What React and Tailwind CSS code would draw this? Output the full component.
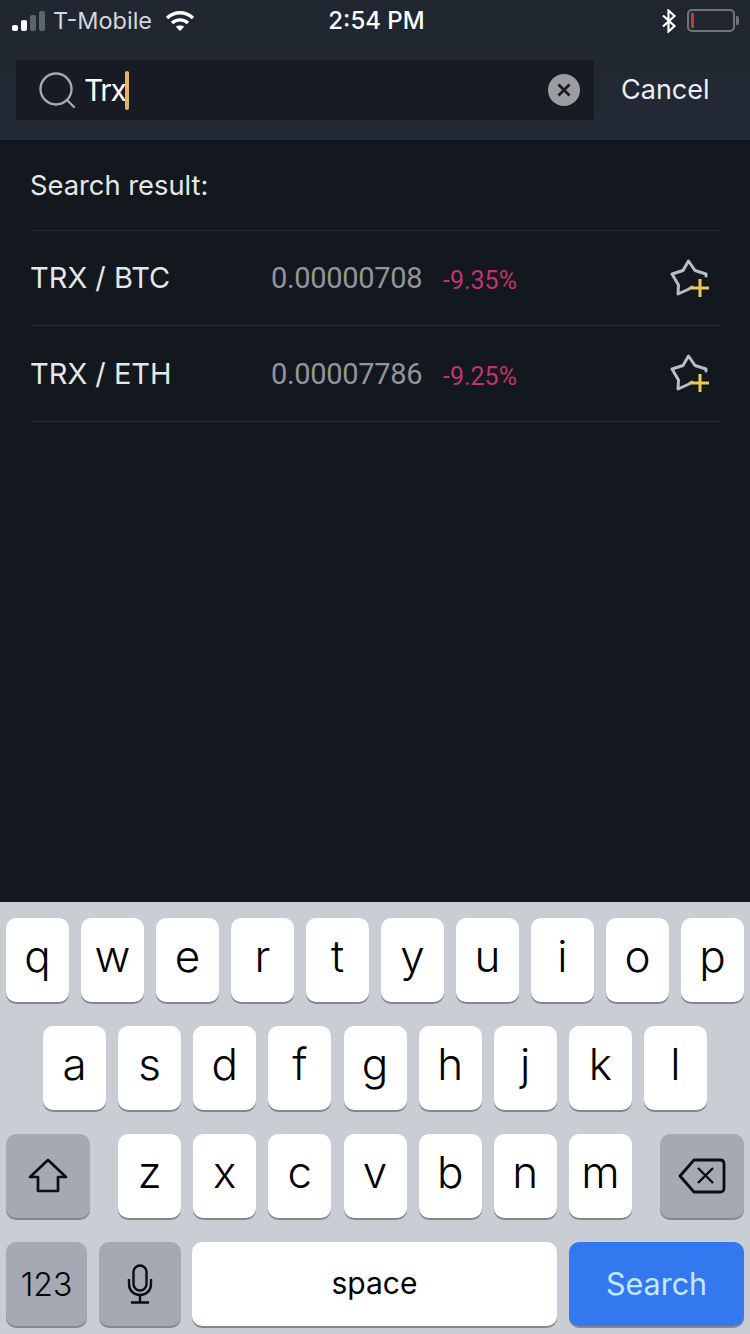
const results = [
  { pair: "TRX / BTC", price: "0.00000708", change: "-9.35%" },
  { pair: "TRX / ETH", price: "0.00007786", change: "-9.25%" },
];

const rowOne = ["q", "w", "e", "r", "t", "y", "u", "i", "o", "p"];
const rowTwo = ["a", "s", "d", "f", "g", "h", "j", "k", "l"];
const rowThree = ["z", "x", "c", "v", "b", "n", "m"];

function SignalBars() {
  return (
    <div className="flex items-end gap-[3px] w-[33px] h-[20px]">
      <div className="w-[6px] h-[6px] rounded-[2px] bg-white" />
      <div className="w-[6px] h-[11px] rounded-[2px] bg-white" />
      <div className="w-[6px] h-[16px] rounded-[2px] bg-[#5e646c]" />
      <div className="w-[6px] h-[20px] rounded-[2px] bg-[#5e646c]" />
    </div>
  );
}

function WifiIcon() {
  return (
    <svg width="30" height="22" viewBox="0 0 30 22" fill="none" stroke="white" strokeWidth="3.4">
      <path d="M2 8 C9.5 1 20.5 1 28 8" />
      <path d="M7 13 C11.5 8.8 18.5 8.8 23 13" />
      <path d="M15 21 L10.8 16.8 C13.2 14.9 16.8 14.9 19.2 16.8 Z" fill="white" stroke="none" />
    </svg>
  );
}

function BluetoothIcon() {
  return (
    <svg width="16" height="24" viewBox="0 0 16 24" fill="none" stroke="white" strokeWidth="2.2">
      <path d="M2 6.5 L13.5 17 L7.5 22.5 L7.5 1.5 L13.5 7 L2 17.5" />
    </svg>
  );
}

function BatteryIcon() {
  return (
    <div className="flex items-center gap-[1px]">
      <div className="w-[48px] h-[23px] rounded-[5px] border-2 border-[#6f747b] p-[2px] flex">
        <div className="w-[3px] h-full bg-[#c9353b]" />
      </div>
      <div className="w-[3px] h-[9px] rounded-r-[2px] bg-[#6f747b]" />
    </div>
  );
}

function StarPlus() {
  return (
    <svg width="40" height="40" viewBox="0 0 40 40" fill="none" strokeLinecap="round" strokeLinejoin="round">
      <path
        d="M36 17 L36 15 L25 11.5 L18.5 2 L13 11.5 L2 15 L8.5 26 L8 35 L18 30.5 L22 28"
        stroke="#bcbdc2"
        strokeWidth="3"
      />
      <path d="M21 29 H39 M30 20 V38" stroke="#f0c850" strokeWidth="3" strokeLinecap="butt" />
    </svg>
  );
}

function Key({ label }) {
  return (
    <div className="w-[63px] h-[84px] rounded-[10px] bg-white shadow-[0_2px_0_#85888e] flex items-center justify-center text-[44px] font-light leading-none text-black pb-[9px]">
      {label}
    </div>
  );
}

function ShiftIcon() {
  return (
    <svg width="40" height="36" viewBox="0 0 40 36" fill="none" stroke="#0b0d12" strokeWidth="2.7" strokeLinejoin="round">
      <path d="M20 2 L38 19 H30 V33 H10 V19 H2 Z" />
    </svg>
  );
}

function DeleteIcon() {
  return (
    <svg width="48" height="36" viewBox="0 0 48 36" fill="none" stroke="#0b0d12" strokeWidth="2.8" strokeLinejoin="round">
      <path d="M16 2 H42 Q46 2 46 6 V30 Q46 34 42 34 H16 L2 18 Z" />
      <path d="M20 10 L35 25 M35 10 L20 25" strokeWidth="2.4" />
    </svg>
  );
}

function MicIcon() {
  return (
    <svg width="26" height="40" viewBox="0 0 26 40" fill="none" stroke="#0b0d12" strokeWidth="2.4">
      <rect x="6.5" y="1.5" width="13" height="25" rx="6.5" />
      <path d="M2 15 V20 C2 26.5 6.5 31 13 31 C19.5 31 24 26.5 24 20 V15" />
      <path d="M13 31 V38 M4 38.5 H22" />
    </svg>
  );
}

export default function App() {
  return (
    <div className="w-[750px] h-[1334px] flex flex-col bg-[#13171e] overflow-hidden font-['Inter','Liberation_Sans',sans-serif]">
      {/* top bar */}
      <div className="h-[140px] bg-gradient-to-b from-[#1f2630] to-[#222a35]">
        <div className="h-[60px] pb-[19px] pl-[12px] pr-[11px] relative flex items-center text-white text-[24px]">
          <SignalBars />
          <span className="ml-[8px] text-[23.5px] text-[#d5d7da]">T-Mobile</span>
          <div className="ml-[13px]">
            <WifiIcon />
          </div>
          <div className="flex-1" />
          <BluetoothIcon />
          <div className="ml-[10px]">
            <BatteryIcon />
          </div>
          <span className="absolute left-[3px] right-0 top-[3px] text-center font-medium pointer-events-none">2:54 PM</span>
        </div>
        <div className="flex items-center pl-[16px]">
          <div className="w-[578px] h-[60px] bg-[#181b23] flex items-center pl-[22px] pr-[14px]">
            <svg width="38" height="38" viewBox="0 0 38 38" fill="none" stroke="#a5a8ad" strokeWidth="2.4">
              <circle cx="18" cy="18" r="15.5" />
              <path d="M29 29 L36 36" strokeLinecap="round" />
            </svg>
            <span className="ml-[8px] text-[30px] tracking-[-1.5px] text-white">Trx</span>
            <div className="w-[4px] h-[39px] rounded-[2px] bg-[#e0b860]" />
            <div className="flex-1" />
            <div className="w-[32px] h-[32px] rounded-full bg-[#9c9da1] flex items-center justify-center">
              <svg width="14" height="14" viewBox="0 0 14 14" stroke="#181b23" strokeWidth="2.8">
                <path d="M1.5 1.5 L12.5 12.5 M12.5 1.5 L1.5 12.5" />
              </svg>
            </div>
          </div>
          <span className="ml-[27px] mt-[1px] text-[27px] text-[#eceef0]">Cancel</span>
        </div>
      </div>

      {/* results */}
      <div className="flex-1 px-[30px]">
        <div className="h-[91px] pt-[2px] flex items-center text-[27.3px] text-[#e6e7e9] border-b border-[#242933]">
          Search result:
        </div>
        {results.map((item) => (
          <div key={item.pair} className="h-[95.4px] flex items-center border-b border-[#242933]">
            <div className="w-[241px] text-[29px] text-[#e6e7e9]">{item.pair}</div>
            <div className="w-[172px] mt-[2px] font-['Roboto',sans-serif] text-[29px] tracking-[-0.3px] text-[#939599]">{item.price}</div>
            <div className="flex-1 mt-[6px] font-['Roboto',sans-serif] text-[25px] text-[#c2336f]">{item.change}</div>
            <div className="mr-[10px] mt-[1px]">
              <StarPlus />
            </div>
          </div>
        ))}
      </div>

      {/* keyboard */}
      <div className="h-[432px] bg-[#c9cdd4] pt-[16px] px-[6px] flex flex-col gap-[24px]">
        <div className="flex gap-[12px]">
          {rowOne.map((k) => (
            <Key key={k} label={k} />
          ))}
        </div>
        <div className="flex gap-[12.125px] pl-[37px]">
          {rowTwo.map((k) => (
            <Key key={k} label={k} />
          ))}
        </div>
        <div className="flex justify-between">
          <div className="w-[84px] h-[84px] rounded-[10px] bg-[#a4a9b3] shadow-[0_2px_0_#85888e] flex items-center justify-center">
            <ShiftIcon />
          </div>
          <div className="flex gap-[12.125px]">
            {rowThree.map((k) => (
              <Key key={k} label={k} />
            ))}
          </div>
          <div className="w-[84px] h-[84px] rounded-[10px] bg-[#a4a9b3] shadow-[0_2px_0_#85888e] flex items-center justify-center">
            <DeleteIcon />
          </div>
        </div>
        <div className="flex">
          <div className="w-[81px] h-[84px] rounded-[10px] bg-[#a4a9b3] shadow-[0_2px_0_#85888e] flex items-center justify-center pt-[2px] text-[32px] font-light text-black">
            123
          </div>
          <div className="ml-[12px] w-[82px] h-[84px] rounded-[10px] bg-[#a4a9b3] shadow-[0_2px_0_#85888e] flex items-center justify-center">
            <MicIcon />
          </div>
          <div className="ml-[11px] w-[365px] h-[84px] rounded-[10px] bg-white shadow-[0_2px_0_#85888e] flex items-center justify-center pb-[2px] text-[30px] text-black">
            space
          </div>
          <div className="ml-[12px] w-[175px] h-[84px] rounded-[10px] bg-[#3478f0] shadow-[0_2px_0_#85888e] flex items-center justify-center text-[30.5px] text-[#c4e8fb]">
            Search
          </div>
        </div>
      </div>
    </div>
  );
}
